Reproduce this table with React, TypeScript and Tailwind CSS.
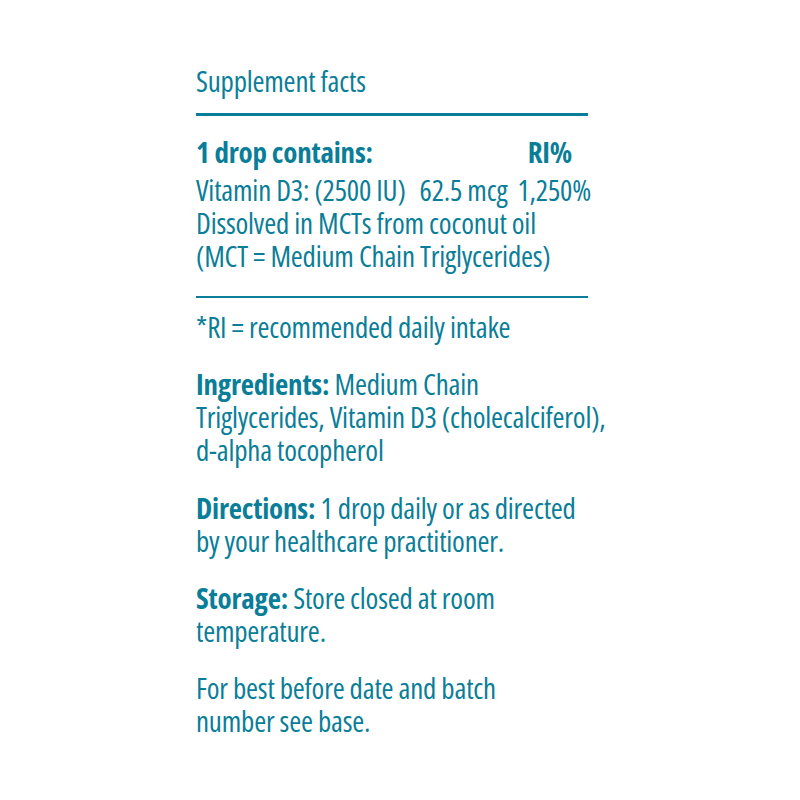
export default function App() {
  return (
    <div className="w-[800px] h-[800px] bg-white text-[#0a7e98] font-['Open_Sans',sans-serif] font-stretch-[87.5%] text-[29px] leading-[33px] tracking-[-0.2px]">
      <div className="ml-[196px] w-[392px] pt-[64px]">
        <div className="h-[33px]">Supplement facts</div>
        <div className="mt-[16px] h-[3px] bg-[#0a7e98]" />
        <div className="mt-[19px] flex justify-between pr-[16px] font-bold">
          <span>1 drop contains:</span>
          <span>RI%</span>
        </div>
        <div className="mt-[5px]">
          <div className="flex whitespace-nowrap">
            <span>Vitamin D3: (2500 IU)</span>
            <span className="ml-[14px]">62.5 mcg</span>
            <span className="ml-[10px]">1,250%</span>
          </div>
          <div className="whitespace-nowrap">Dissolved in MCTs from coconut oil</div>
          <div className="whitespace-nowrap">(MCT = Medium Chain Triglycerides)</div>
        </div>
        <div className="mt-[24px] h-[2px] bg-[#0a7e98]" />
        <div className="mt-[12px] whitespace-nowrap">*RI = recommended daily intake</div>
        <div className="mt-[24px] whitespace-nowrap">
          <div><span className="font-bold">Ingredients:</span> Medium Chain</div>
          <div>Triglycerides, Vitamin D3 (cholecalciferol),</div>
          <div>d-alpha tocopherol</div>
        </div>
        <div className="mt-[25px] whitespace-nowrap">
          <div><span className="font-bold">Directions:</span> 1 drop daily or as directed</div>
          <div>by your healthcare practitioner.</div>
        </div>
        <div className="mt-[24px] whitespace-nowrap">
          <div><span className="font-bold">Storage:</span> Store closed at room</div>
          <div>temperature.</div>
        </div>
        <div className="mt-[24px] whitespace-nowrap">
          <div>For best before date and batch</div>
          <div>number see base.</div>
        </div>
      </div>
    </div>
  );
}
